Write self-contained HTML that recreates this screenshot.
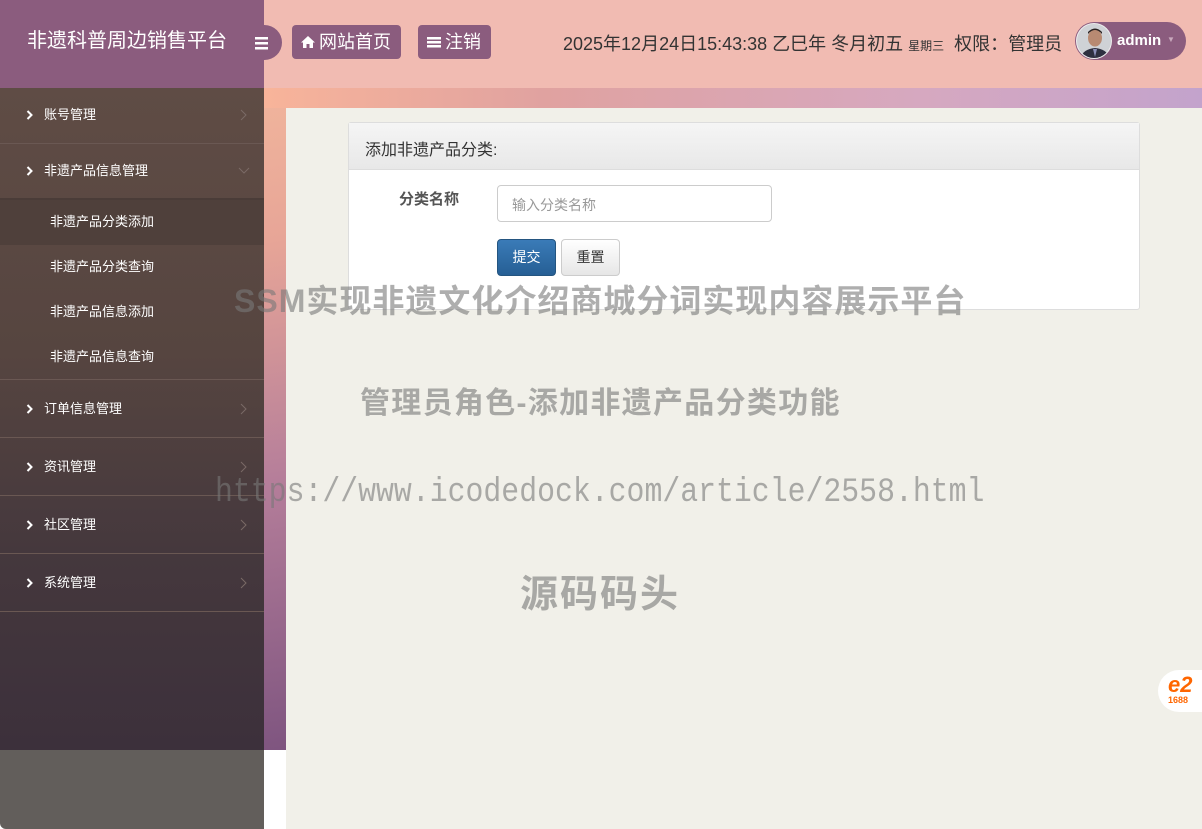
<!DOCTYPE html>
<html><head><meta charset="utf-8"><style>
*{margin:0;padding:0;box-sizing:border-box}
body{width:1202px;height:829px;overflow:hidden;position:relative;font-family:"Liberation Sans","Noto Sans CJK SC",sans-serif;background:#fff}
.bg{position:absolute;left:0;top:0;width:1202px;height:750px;background:linear-gradient(170deg,#f9c3a1 0%,#e7a597 30%,#b57e9a 55%,#5e3c70 100%)}
.topbar{position:absolute;left:0;top:0;width:1202px;height:88px;background:#f1bbb2}
.stripe{position:absolute;left:264px;top:88px;width:938px;height:20px;background:linear-gradient(90deg,#f8b49a,#e0a2a0 30%,#d6a8c0 70%,#c3a3cc)}
.logo{position:absolute;left:0;top:0;width:264px;height:88px;background:#8b5c7e;color:#fff;font-size:20px;padding:24px 0 0 27px}
.tog{position:absolute;left:246px;top:25px;width:36px;height:35px;border-radius:0 18px 18px 0;background:#8b5c7e}
.btn{position:absolute;top:25px;height:34px;background:#8b5c7e;color:#fff;font-size:18px;border-radius:4px;line-height:34px;padding:0 8px}
.date{position:absolute;left:563px;top:30px;font-size:18px;color:#333}
.user{position:absolute;left:1075px;top:22px;width:111px;height:38px;border-radius:19px;background:#8b5c7e;color:#fff;font-size:15px}
.av{position:absolute;left:1px;top:1px;width:36px;height:36px;border-radius:50%;overflow:hidden;background:#cfd2d6;border:1px solid #eee}
.side{position:absolute;left:0;top:88px;width:264px;height:662px;background:linear-gradient(180deg,#5f4c45 0%,#564540 40%,#45383d 70%,#3c303b 100%)}
.sideb{position:absolute;left:0;top:750px;width:264px;height:79px;background:#625e5b;border-radius:0 0 0 6px}
.it{height:58px;border-bottom:1px solid #6a5853;color:#fff;font-size:13px;line-height:57px;padding-left:44px;position:relative}
.it .l{position:absolute;left:26px;top:24px}
.it .r{position:absolute;right:16px;top:23px}
.it.t{line-height:54px}
.it.t .l{top:22px}.it.t .r{top:21px}
.sub{height:45px;color:#fff;font-size:13px;line-height:44px;padding-left:50px}
.content{position:absolute;left:286px;top:108px;width:916px;height:721px;background:#f1f0e9}
.panel{position:absolute;left:348px;top:122px;width:792px;height:188px;background:#fff;border:1px solid #ddd;border-radius:3px}
.ph{height:47px;background:linear-gradient(#f5f5f5,#e8e8e8);border-bottom:1px solid #ddd;font-size:16px;color:#333;padding:13px 0 0 16px}
.wm{position:absolute;color:rgba(120,120,120,.6);font-weight:bold;white-space:nowrap;z-index:10}
</style></head><body>
<div class="bg"></div>
<div class="topbar"></div>
<div class="stripe"></div>
<div class="content"></div>
<div class="logo">非遗科普周边销售平台</div>
<div class="tog"><svg width="36" height="35"><rect x="9" y="12" width="13" height="2.5" fill="#fff"/><rect x="9" y="17" width="13" height="2.5" fill="#fff"/><rect x="9" y="22" width="13" height="2.5" fill="#fff"/></svg></div>
<div class="btn" style="left:292px;width:109px"><svg width="16" height="14" style="vertical-align:-1px;margin-right:3px"><path d="M8 1 L1 7.5 L3 7.5 L3 13 L6.5 13 L6.5 9 L9.5 9 L9.5 13 L13 13 L13 7.5 L15 7.5 Z" fill="#fff"/></svg>网站首页</div>
<div class="btn" style="left:418px;width:73px"><svg width="16" height="14" style="vertical-align:-1px;margin-right:3px"><rect x="1" y="2" width="14" height="2.5" fill="#fff"/><rect x="1" y="6" width="14" height="2.5" fill="#fff"/><rect x="1" y="10" width="14" height="2.5" fill="#fff"/></svg>注销</div>
<div class="date">2025年12月24日15:43:38 乙巳年 冬月初五 <span style="font-size:12px">星期三</span> &nbsp;权限：管理员</div>
<div class="user"><div class="av"><svg width="36" height="36"><ellipse cx="18" cy="14" rx="7" ry="8.5" fill="#b88a72"/><path d="M11 10 Q18 2 25 10 L25 8 Q18 1 11 8Z" fill="#2a2322"/><path d="M3 36 Q5 25 18 24 Q31 25 33 36Z" fill="#2e3040"/><path d="M16 25 L18 33 L20 25Z" fill="#8b8fb8"/></svg></div><span style="position:absolute;left:42px;top:10px;font-weight:bold">admin</span><span style="position:absolute;left:92px;top:13px;font-size:8px;color:#c9a8bd">▼</span></div>
<div class="side">
<div class="it t" style="height:56px"><svg class="l" width="8" height="10"><path d="M1.5 1 L5.5 5 L1.5 9" stroke="#fff" stroke-width="2" fill="none"/></svg>账号管理<svg class="r" width="8" height="12"><path d="M1 1 L6 6 L1 11" stroke="#7a6a66" stroke-width="1" fill="none"/></svg></div>
<div class="it t" style="height:56px;border-bottom:2px solid #4a3c38"><svg class="l" width="8" height="10"><path d="M1.5 1 L5.5 5 L1.5 9" stroke="#fff" stroke-width="2" fill="none"/></svg>非遗产品信息管理<svg class="r" width="12" height="8" style="top:23px;right:14px"><path d="M1 1 L6 6 L11 1" stroke="#7a6a66" stroke-width="1" fill="none"/></svg></div>
<div class="sub" style="background:#4f403b">非遗产品分类添加</div>
<div class="sub">非遗产品分类查询</div>
<div class="sub">非遗产品信息添加</div>
<div class="sub" style="border-bottom:1px solid #6a5853">非遗产品信息查询</div>
<div class="it"><svg class="l" width="8" height="10"><path d="M1.5 1 L5.5 5 L1.5 9" stroke="#fff" stroke-width="2" fill="none"/></svg>订单信息管理<svg class="r" width="8" height="12"><path d="M1 1 L6 6 L1 11" stroke="#7a6a66" stroke-width="1" fill="none"/></svg></div>
<div class="it"><svg class="l" width="8" height="10"><path d="M1.5 1 L5.5 5 L1.5 9" stroke="#fff" stroke-width="2" fill="none"/></svg>资讯管理<svg class="r" width="8" height="12"><path d="M1 1 L6 6 L1 11" stroke="#7a6a66" stroke-width="1" fill="none"/></svg></div>
<div class="it"><svg class="l" width="8" height="10"><path d="M1.5 1 L5.5 5 L1.5 9" stroke="#fff" stroke-width="2" fill="none"/></svg>社区管理<svg class="r" width="8" height="12"><path d="M1 1 L6 6 L1 11" stroke="#7a6a66" stroke-width="1" fill="none"/></svg></div>
<div class="it"><svg class="l" width="8" height="10"><path d="M1.5 1 L5.5 5 L1.5 9" stroke="#fff" stroke-width="2" fill="none"/></svg>系统管理<svg class="r" width="8" height="12"><path d="M1 1 L6 6 L1 11" stroke="#7a6a66" stroke-width="1" fill="none"/></svg></div>
</div>
<div class="sideb"></div>
<div class="panel">
<div class="ph">添加非遗产品分类:</div>
<div style="position:absolute;left:50px;top:65px;font-size:15px;font-weight:bold;color:#555">分类名称</div>
<div style="position:absolute;left:148px;top:62px;width:275px;height:37px;border:1px solid #ccc;border-radius:4px;font-size:14px;color:#999;padding:9px 0 0 14px">输入分类名称</div>
<div style="position:absolute;left:148px;top:116px;width:59px;height:37px;background:linear-gradient(#3a7bb8,#265f95);border:1px solid #245580;border-radius:4px;color:#fff;font-size:14px;text-align:center;line-height:35px">提交</div>
<div style="position:absolute;left:212px;top:116px;width:59px;height:37px;background:linear-gradient(#fff,#e6e6e6);border:1px solid #ccc;border-radius:4px;color:#333;font-size:14px;text-align:center;line-height:35px">重置</div>
</div>
<div style="position:absolute;left:1158px;top:670px;width:50px;height:42px;background:#fff;border-radius:21px 0 0 21px;color:#f60;font-weight:bold;font-size:9px;padding:5px 0 0 10px"><span style="font-size:22px;font-style:italic;line-height:20px">e2</span><br>1688</div>
<div class="wm" style="left:234px;top:276px;font-size:32px;letter-spacing:1px">SSM实现非遗文化介绍商城分词实现内容展示平台</div>
<div class="wm" style="left:360px;top:378px;font-size:30px;letter-spacing:1.3px">管理员角色-添加非遗产品分类功能</div>
<div class="wm" style="left:215px;top:474px;font-size:34px;font-family:'Liberation Mono',monospace;font-weight:normal;transform:scaleX(0.877);transform-origin:0 0">https://www.icodedock.com/article/2558.html</div>
<div class="wm" style="left:520px;top:563px;font-size:38px;letter-spacing:2px">源码码头</div>
</body></html>
